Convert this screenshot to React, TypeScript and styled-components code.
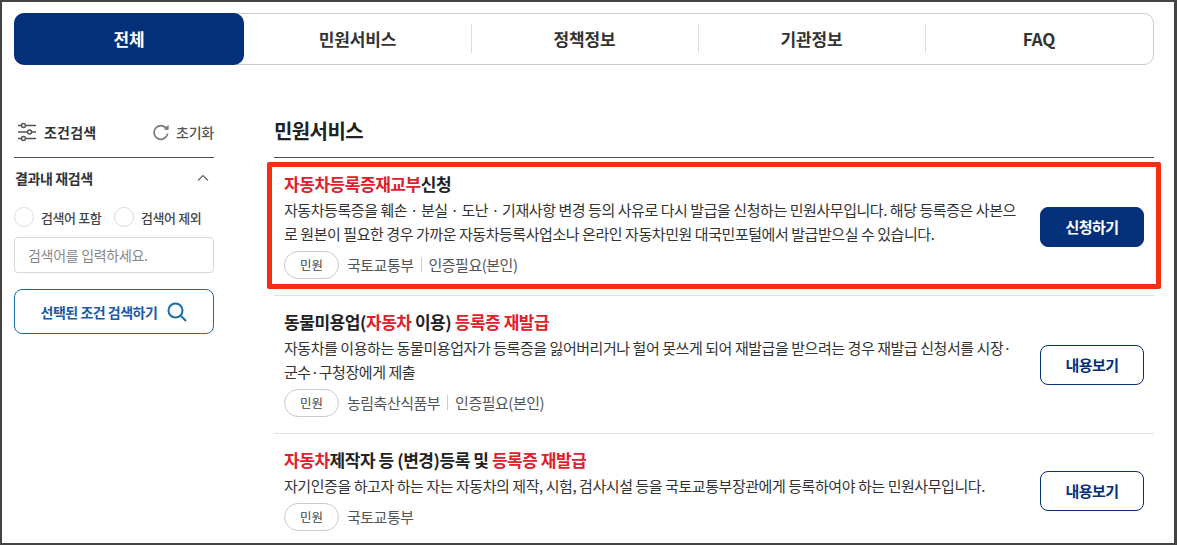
import React from 'react';
import styled, { createGlobalStyle } from 'styled-components';

const GlobalStyle = createGlobalStyle`
  html, body {
    margin: 0;
    padding: 0;
    background: #fff;
  }
  * {
    box-sizing: border-box;
  }
  body {
    font-family: "Noto Sans CJK KR", "Noto Sans", sans-serif;
    color: #222;
  }
`;

const Frame = styled.div`
  width: 1177px;
  height: 545px;
  border: solid #444;
  border-width: 2px 3px 2px 2px;
  padding: 11px 20px 0 12px;
  overflow: hidden;
`;

const TabBar = styled.div`
  display: flex;
  width: 1140px;
  height: 52px;
  border: 1px solid #ccc;
  border-radius: 10px;
`;

const Tab = styled.div<{ $active?: boolean; $width: number }>`
  position: relative;
  width: ${p => p.$width}px;
  margin: ${p => (p.$active ? '-1px 0 -1px -1px' : '0')};
  padding-bottom: 2px;
  display: flex;
  align-items: center;
  justify-content: center;
  font-size: 17px;
  font-weight: 700;
  letter-spacing: -0.1px;
  color: ${p => (p.$active ? '#fff' : '#333')};
  background: ${p => (p.$active ? '#04307a' : 'transparent')};
  border-radius: ${p => (p.$active ? '10px' : '0')};
`;

const TabDivider = styled.span`
  position: absolute;
  left: 0;
  top: 10px;
  bottom: 11px;
  width: 1px;
  background: #ddd;
`;

const Body = styled.div`
  display: flex;
  gap: 60px;
  margin-top: 42px;
`;

const Side = styled.aside`
  width: 200px;
  flex: none;
`;

const SideHead = styled.div`
  display: flex;
  align-items: center;
  height: 51px;
  padding: 0 0 1px 3px;
  border-bottom: 1px solid #555;
`;

const SideTitle = styled.strong`
  margin-left: 7px;
  font-size: 14px;
  font-weight: 700;
  letter-spacing: 0.2px;
  color: #333;
`;

const ResetButton = styled.div`
  display: flex;
  align-items: center;
  gap: 6px;
  margin-left: auto;
  font-size: 14px;
  font-weight: 500;
  letter-spacing: -0.2px;
  color: #555;
`;

const FilterHead = styled.div`
  display: flex;
  align-items: center;
  justify-content: space-between;
  height: 40px;
  padding: 0 5px 0 1px;
  font-size: 14px;
  font-weight: 700;
  letter-spacing: -0.4px;
  color: #333;
`;

const RadioRow = styled.div`
  display: flex;
  align-items: center;
  height: 30px;
  margin-top: 4px;
`;

const Radio = styled.span`
  width: 20px;
  height: 20px;
  border: 1px solid #ddd;
  border-radius: 50%;
  margin-right: 7px;
  flex: none;
`;

const RadioLabel = styled.span`
  width: 73px;
  font-size: 13px;
  font-weight: 500;
  letter-spacing: -0.4px;
  color: #444;
  white-space: nowrap;
`;

const SearchInput = styled.div`
  display: flex;
  align-items: center;
  height: 36px;
  margin-top: 5px;
  padding: 0 13px;
  border: 1px solid #d8d8d8;
  border-radius: 4px;
  font-size: 14px;
  letter-spacing: -0.3px;
  color: #888;
`;

const SearchButton = styled.div`
  display: flex;
  align-items: center;
  justify-content: center;
  gap: 10px;
  height: 45px;
  margin-top: 16px;
  border: 1px solid #1a6ea8;
  border-radius: 8px;
  font-size: 14px;
  font-weight: 700;
  letter-spacing: -0.5px;
  color: #1a5aa8;
`;

const Main = styled.main`
  position: relative;
  width: 880px;
  flex: none;
`;

const SectionTitle = styled.h2`
  margin: 0;
  height: 51px;
  padding-top: 9px;
  border-bottom: 1px solid #555;
  font-size: 20px;
  line-height: 30px;
  font-weight: 700;
  letter-spacing: -0.6px;
  color: #222;
`;

const ResultItem = styled.article<{ $height: number }>`
  display: flex;
  align-items: center;
  justify-content: space-between;
  height: ${p => p.$height}px;
  padding: 0 10px;
  border-bottom: 1px solid #e0e0e0;
`;

const ItemText = styled.div`
  width: 740px;
  margin-bottom: 3px;
`;

const ItemTitle = styled.h3`
  margin: 0;
  font-size: 17px;
  line-height: 24px;
  font-weight: 700;
  letter-spacing: -0.45px;
  color: #222;
`;

const Hit = styled.em`
  font-style: normal;
  color: #e0202a;
`;

const ItemDesc = styled.p`
  margin: 2px 0 0;
  font-size: 15px;
  line-height: 24px;
  letter-spacing: -0.44px;
  color: #333;
  white-space: nowrap;
`;

const MetaRow = styled.div`
  display: flex;
  align-items: center;
  margin-top: 5px;
  font-size: 15px;
  letter-spacing: -0.5px;
  color: #555;
`;

const Badge = styled.span`
  display: flex;
  align-items: center;
  justify-content: center;
  width: 55px;
  height: 28px;
  margin-right: 8px;
  border: 1px solid #ccc;
  border-radius: 14px;
  font-size: 12.5px;
  letter-spacing: 0;
  color: #444;
`;

const MetaItem = styled.span<{ $divided?: boolean }>`
  ${p =>
    p.$divided &&
    `
    margin-left: 7px;
    padding-left: 7px;
    border-left: 1px solid #ccc;
    line-height: 15px;
  `}
`;

const ActionButton = styled.div<{ $filled?: boolean }>`
  display: flex;
  align-items: center;
  justify-content: center;
  width: 104px;
  height: 40px;
  flex: none;
  border: 1px solid #04307a;
  border-radius: 8px;
  font-size: 15px;
  font-weight: 700;
  letter-spacing: -0.5px;
  color: ${p => (p.$filled ? '#fff' : '#04307a')};
  background: ${p => (p.$filled ? '#04307a' : '#fff')};
`;

const Highlight = styled.div`
  position: absolute;
  left: -7px;
  top: 55px;
  width: 894px;
  height: 127px;
  border: 5px solid #f0300e;
  border-radius: 2px;
  pointer-events: none;
`;

const SlidersIcon = () => (
  <svg width="20" height="20" viewBox="0 0 20 20" fill="none" stroke="#555" strokeWidth="1.5">
    <path d="M1 3.5h3.5M8.5 3.5H19M1 10h9.5M14.5 10H19M1 16.5h3.5M8.5 16.5H19" />
    <circle cx="6.5" cy="3.5" r="2" />
    <circle cx="12.5" cy="10" r="2" />
    <circle cx="6.5" cy="16.5" r="2" />
  </svg>
);

const ResetIcon = () => (
  <svg width="18" height="18" viewBox="0 0 18 18" fill="none">
    <path d="M15.2 7A6.8 6.8 0 1 0 15.6 10.5" stroke="#777" strokeWidth="1.6" />
    <path d="M11.6 6.6h5V1.8z" fill="#777" />
  </svg>
);

const ChevronIcon = () => (
  <svg width="12" height="8" viewBox="0 0 12 8" fill="none" stroke="#666" strokeWidth="1.2">
    <path d="M1 6.5 6 1.5l5 5" />
  </svg>
);

const SearchIcon = () => (
  <svg width="20" height="20" viewBox="0 0 20 20" fill="none" stroke="#1a6ea8" strokeWidth="2">
    <circle cx="8.5" cy="8.5" r="7" />
    <path d="m13.5 13.5 5.5 5.5" />
  </svg>
);

const tabs = [
  { label: '전체', width: 230 },
  { label: '민원서비스', width: 227 },
  { label: '정책정보', width: 227 },
  { label: '기관정보', width: 227 },
  { label: 'FAQ', width: 228 },
];

export default function App() {
  return (
    <Frame>
      <GlobalStyle />
      <TabBar>
        {tabs.map((tab, i) => (
          <Tab key={tab.label} $active={i === 0} $width={tab.width}>
            {i > 1 && <TabDivider />}
            {tab.label}
          </Tab>
        ))}
      </TabBar>

      <Body>
        <Side>
          <SideHead>
            <SlidersIcon />
            <SideTitle>조건검색</SideTitle>
            <ResetButton>
              <ResetIcon />
              초기화
            </ResetButton>
          </SideHead>
          <FilterHead>
            결과내 재검색
            <ChevronIcon />
          </FilterHead>
          <RadioRow>
            <Radio />
            <RadioLabel>검색어 포함</RadioLabel>
            <Radio />
            <RadioLabel>검색어 제외</RadioLabel>
          </RadioRow>
          <SearchInput>검색어를 입력하세요.</SearchInput>
          <SearchButton>
            선택된 조건 검색하기
            <SearchIcon />
          </SearchButton>
        </Side>

        <Main>
          <SectionTitle>민원서비스</SectionTitle>
          <ResultItem $height={138}>
            <ItemText>
              <ItemTitle>
                <Hit>자동차등록증재교부</Hit>신청
              </ItemTitle>
              <ItemDesc>
                자동차등록증을 훼손 · 분실 · 도난 · 기재사항 변경 등의 사유로 다시 발급을 신청하는 민원사무입니다. 해당 등록증은 사본으
                <br />
                로 원본이 필요한 경우 가까운 자동차등록사업소나 온라인 자동차민원 대국민포털에서 발급받으실 수 있습니다.
              </ItemDesc>
              <MetaRow>
                <Badge>민원</Badge>
                <MetaItem>국토교통부</MetaItem>
                <MetaItem $divided>인증필요(본인)</MetaItem>
              </MetaRow>
            </ItemText>
            <ActionButton $filled>신청하기</ActionButton>
          </ResultItem>
          <ResultItem $height={138}>
            <ItemText>
              <ItemTitle>
                동물미용업(<Hit>자동차</Hit> 이용) <Hit>등록증 재발급</Hit>
              </ItemTitle>
              <ItemDesc>
                자동차를 이용하는 동물미용업자가 등록증을 잃어버리거나 헐어 못쓰게 되어 재발급을 받으려는 경우 재발급 신청서를 시장·
                <br />
                군수·구청장에게 제출
              </ItemDesc>
              <MetaRow>
                <Badge>민원</Badge>
                <MetaItem>농림축산식품부</MetaItem>
                <MetaItem $divided>인증필요(본인)</MetaItem>
              </MetaRow>
            </ItemText>
            <ActionButton>내용보기</ActionButton>
          </ResultItem>
          <ResultItem $height={114}>
            <ItemText>
              <ItemTitle>
                <Hit>자동차</Hit>제작자 등 (변경)등록 및 <Hit>등록증 재발급</Hit>
              </ItemTitle>
              <ItemDesc>
                자기인증을 하고자 하는 자는 자동차의 제작, 시험, 검사시설 등을 국토교통부장관에게 등록하여야 하는 민원사무입니다.
              </ItemDesc>
              <MetaRow>
                <Badge>민원</Badge>
                <MetaItem>국토교통부</MetaItem>
              </MetaRow>
            </ItemText>
            <ActionButton>내용보기</ActionButton>
          </ResultItem>
          <Highlight />
        </Main>
      </Body>
    </Frame>
  );
}
